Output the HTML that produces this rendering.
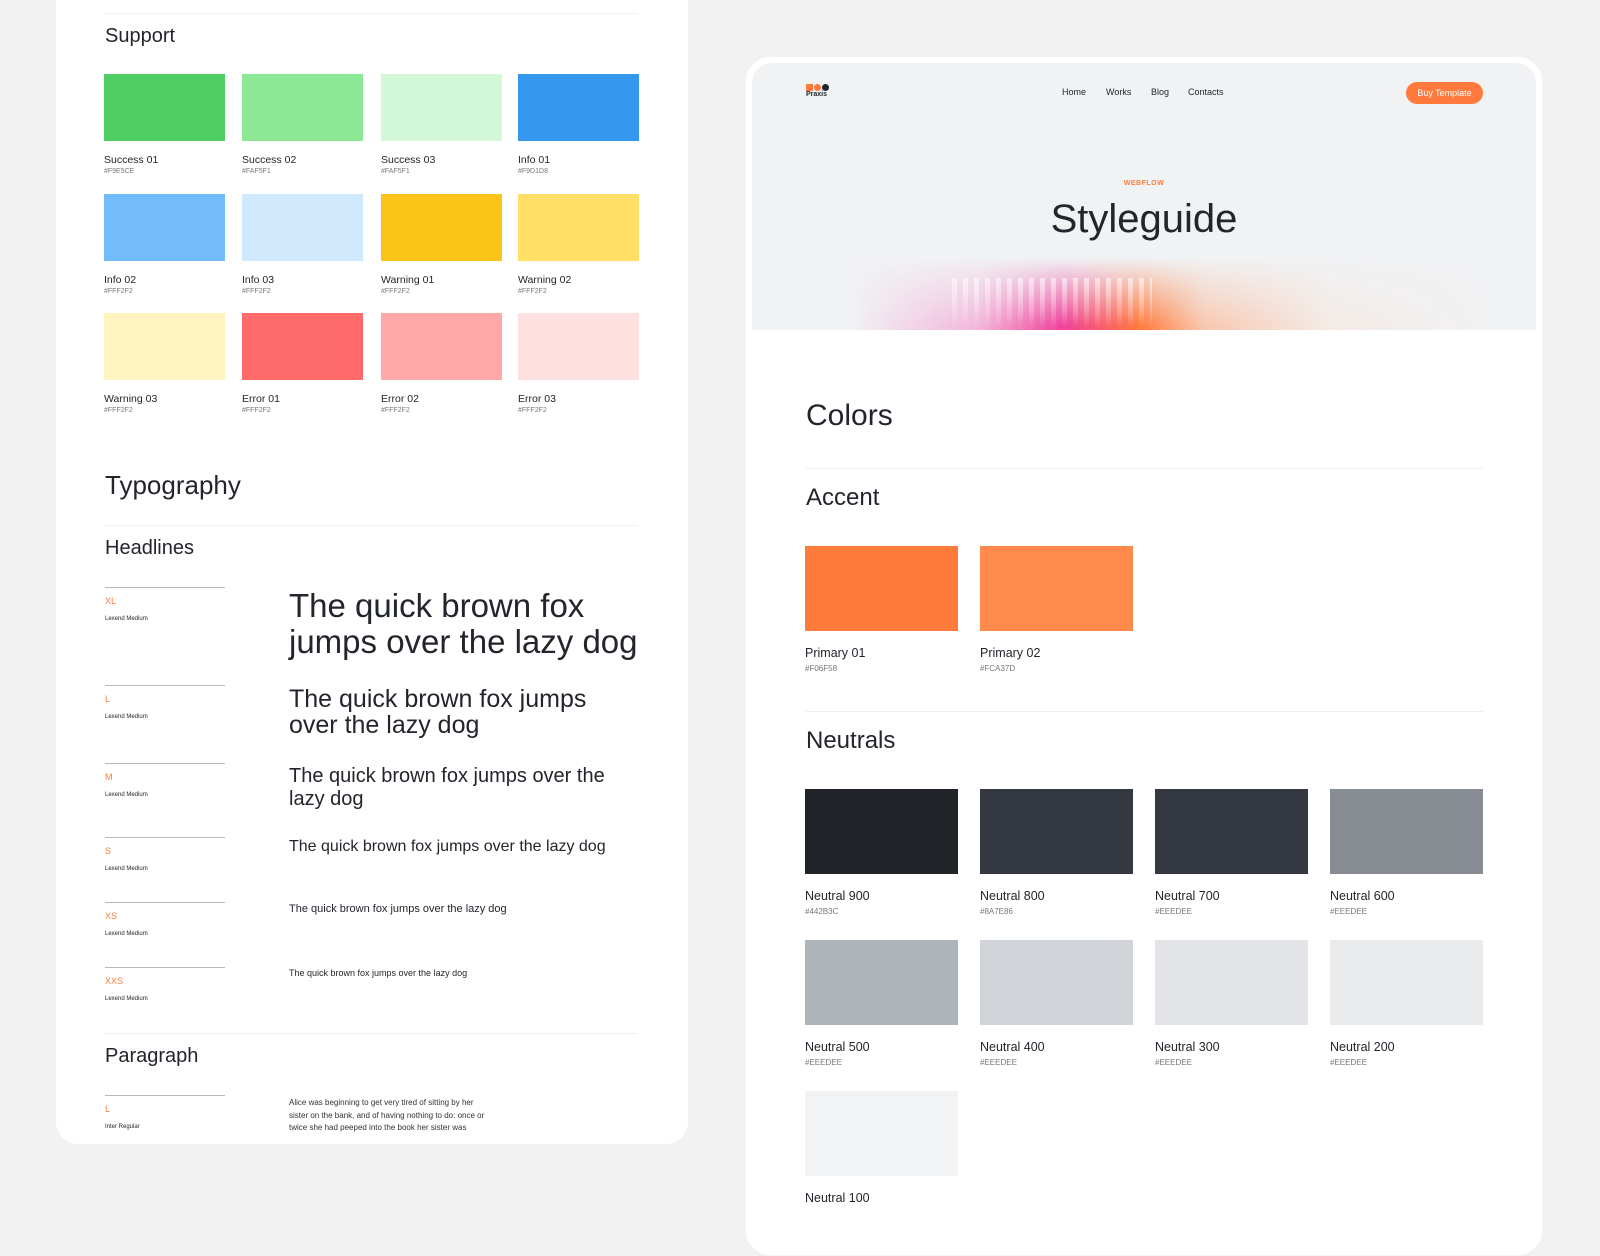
<!DOCTYPE html>
<html><head><meta charset="utf-8"><style>
*{margin:0;padding:0;box-sizing:border-box}
body{width:1600px;height:1200px;background:#f2f2f3;font-family:"Liberation Sans",sans-serif;color:#22252b;position:relative;overflow:hidden}
.a{position:absolute;white-space:nowrap}
.lp{position:absolute;left:56px;top:-30px;width:632px;height:1174px;background:#fff;border-radius:22px;overflow:hidden}
.rp{position:absolute;left:745px;top:56px;width:798px;height:1200px;background:#fff;border-radius:26px;border:1px solid #f4f4f5}
.sw{position:absolute}
.lab{position:absolute;font-size:10.5px;color:#22252b;white-space:nowrap}
.hex{position:absolute;font-size:7px;color:#777;white-space:nowrap}
.line{position:absolute;height:1px;background:#b8b8bb}
.hr{position:absolute;height:1px;background:#efeff1}
.or{color:#ff7a3c}
.nl{position:absolute;font-size:12.5px;white-space:nowrap}
.nh{position:absolute;font-size:8px;color:#777;white-space:nowrap}
</style></head><body>
<div class="lp"></div>
<div class="hr" style="left:105px;top:13px;width:533px"></div>
<div class="a" style="left:105px;top:25px;font-size:20px">Support</div>
<div class="sw" style="left:104px;top:74px;width:121px;height:67px;background:#4fce64"></div>
<div class="sw" style="left:242px;top:74px;width:121px;height:67px;background:#8de895"></div>
<div class="sw" style="left:381px;top:74px;width:121px;height:67px;background:#d3f8d7"></div>
<div class="sw" style="left:518px;top:74px;width:121px;height:67px;background:#3498ee"></div>
<div class="lab" style="left:104px;top:154px">Success 01</div><div class="hex" style="left:104px;top:168px">#F9E5CE</div>
<div class="lab" style="left:242px;top:154px">Success 02</div><div class="hex" style="left:242px;top:168px">#FAF5F1</div>
<div class="lab" style="left:381px;top:154px">Success 03</div><div class="hex" style="left:381px;top:168px">#FAF5F1</div>
<div class="lab" style="left:518px;top:154px">Info 01</div><div class="hex" style="left:518px;top:168px">#F9D1D8</div>
<div class="sw" style="left:104px;top:194px;width:121px;height:67px;background:#72bcfb"></div>
<div class="sw" style="left:242px;top:194px;width:121px;height:67px;background:#d0e9fd"></div>
<div class="sw" style="left:381px;top:194px;width:121px;height:67px;background:#fcc419"></div>
<div class="sw" style="left:518px;top:194px;width:121px;height:67px;background:#ffdf67"></div>
<div class="lab" style="left:104px;top:274px">Info 02</div><div class="hex" style="left:104px;top:288px">#FFF2F2</div>
<div class="lab" style="left:242px;top:274px">Info 03</div><div class="hex" style="left:242px;top:288px">#FFF2F2</div>
<div class="lab" style="left:381px;top:274px">Warning 01</div><div class="hex" style="left:381px;top:288px">#FFF2F2</div>
<div class="lab" style="left:518px;top:274px">Warning 02</div><div class="hex" style="left:518px;top:288px">#FFF2F2</div>
<div class="sw" style="left:104px;top:313px;width:121px;height:67px;background:#fff3bf"></div>
<div class="sw" style="left:242px;top:313px;width:121px;height:67px;background:#ff6b6b"></div>
<div class="sw" style="left:381px;top:313px;width:121px;height:67px;background:#ffa8a8"></div>
<div class="sw" style="left:518px;top:313px;width:121px;height:67px;background:#ffe0e1"></div>
<div class="lab" style="left:104px;top:393px">Warning 03</div><div class="hex" style="left:104px;top:407px">#FFF2F2</div>
<div class="lab" style="left:242px;top:393px">Error 01</div><div class="hex" style="left:242px;top:407px">#FFF2F2</div>
<div class="lab" style="left:381px;top:393px">Error 02</div><div class="hex" style="left:381px;top:407px">#FFF2F2</div>
<div class="lab" style="left:518px;top:393px">Error 03</div><div class="hex" style="left:518px;top:407px">#FFF2F2</div>

<div class="a" style="left:105px;top:470px;font-size:26px">Typography</div>
<div class="hr" style="left:105px;top:525px;width:533px"></div>
<div class="a" style="left:105px;top:537px;font-size:20px">Headlines</div>

<div class="line" style="left:105px;top:587px;width:120px"></div>
<div class="a or" style="left:105px;top:596px;font-size:9px">XL</div>
<div class="a" style="left:105px;top:616px;font-size:6px">Lexend Medium</div>
<div class="a" style="left:289px;top:588px;font-size:33px;line-height:36px">The quick brown fox<br>jumps over the lazy dog</div>

<div class="line" style="left:105px;top:685px;width:120px"></div>
<div class="a or" style="left:105px;top:694px;font-size:9px">L</div>
<div class="a" style="left:105px;top:714px;font-size:6px">Lexend Medium</div>
<div class="a" style="left:289px;top:686px;font-size:25px;line-height:26px">The quick brown fox jumps<br>over the lazy dog</div>

<div class="line" style="left:105px;top:763px;width:120px"></div>
<div class="a or" style="left:105px;top:772px;font-size:9px">M</div>
<div class="a" style="left:105px;top:792px;font-size:6px">Lexend Medium</div>
<div class="a" style="left:289px;top:765px;font-size:20px;line-height:23px">The quick brown fox jumps over the<br>lazy dog</div>

<div class="line" style="left:105px;top:837px;width:120px"></div>
<div class="a or" style="left:105px;top:846px;font-size:9px">S</div>
<div class="a" style="left:105px;top:866px;font-size:6px">Lexend Medium</div>
<div class="a" style="left:289px;top:838px;font-size:16px">The quick brown fox jumps over the lazy dog</div>

<div class="line" style="left:105px;top:902px;width:120px"></div>
<div class="a or" style="left:105px;top:911px;font-size:9px">XS</div>
<div class="a" style="left:105px;top:931px;font-size:6px">Lexend Medium</div>
<div class="a" style="left:289px;top:903px;font-size:11px">The quick brown fox jumps over the lazy dog</div>

<div class="line" style="left:105px;top:967px;width:120px"></div>
<div class="a or" style="left:105px;top:976px;font-size:9px">XXS</div>
<div class="a" style="left:105px;top:996px;font-size:6px">Lexend Medium</div>
<div class="a" style="left:289px;top:968px;font-size:9px">The quick brown fox jumps over the lazy dog</div>

<div class="hr" style="left:105px;top:1033px;width:533px"></div>
<div class="a" style="left:105px;top:1045px;font-size:20px">Paragraph</div>
<div class="line" style="left:105px;top:1095px;width:120px"></div>
<div class="a or" style="left:105px;top:1104px;font-size:9px">L</div>
<div class="a" style="left:105px;top:1124px;font-size:6px">Inter Regular</div>
<div class="a" style="left:289px;top:1097px;font-size:8px;line-height:12.5px;color:#333">Alice was beginning to get very tired of sitting by her<br>sister on the bank, and of having nothing to do: once or<br>twice she had peeped into the book her sister was</div>
<div style="position:absolute;left:0;top:1144px;width:700px;height:60px;background:#f2f2f3"></div>

<div class="rp"></div>
<div style="position:absolute;left:752px;top:63px;width:784px;height:267px;background:#f1f2f4;border-radius:20px 20px 0 0;overflow:hidden">
 <div style="position:absolute;left:100px;top:195px;width:640px;height:75px;background:linear-gradient(90deg,rgba(255,200,220,0) 0%,rgba(245,120,190,.5) 20%,#f0409a 33%,#ff7a3c 45%,rgba(255,160,110,.5) 55%,rgba(250,220,200,.3) 75%,rgba(250,230,220,0) 100%);-webkit-mask:linear-gradient(to bottom,transparent,#000 90%);mask:linear-gradient(to bottom,transparent,#000 90%)"></div>
 <div style="position:absolute;left:200px;top:215px;width:200px;height:52px;background:repeating-linear-gradient(90deg,rgba(255,255,255,.55) 0 5px,rgba(255,255,255,0) 5px 11px);-webkit-mask:linear-gradient(to bottom,#000,transparent);mask:linear-gradient(to bottom,#000,transparent)"></div>
</div>
<div style="position:absolute;left:806px;top:84px;width:7px;height:7px;background:#ff7a3c"></div>
<div style="position:absolute;left:814px;top:84px;width:7px;height:7px;background:#ff7a3c;border-radius:50%"></div>
<div style="position:absolute;left:822px;top:84px;width:7px;height:7px;background:#22252b;border-radius:50%"></div>
<div class="a" style="left:806px;top:91px;font-size:7px;font-weight:bold">Praxis</div>
<div class="a" style="left:1062px;top:87px;font-size:9px">Home</div>
<div class="a" style="left:1106px;top:87px;font-size:9px">Works</div>
<div class="a" style="left:1151px;top:87px;font-size:9px">Blog</div>
<div class="a" style="left:1188px;top:87px;font-size:9px">Contacts</div>
<div class="a" style="left:1406px;top:82px;width:77px;height:22px;border-radius:11px;background:#ff7a3c;color:#fff;font-size:9px;line-height:22px;text-align:center">Buy Template</div>
<div class="a or" style="left:1094px;top:180px;width:100px;text-align:center;font-size:7px;font-weight:bold;letter-spacing:.5px">WEBFLOW</div>
<div class="a" style="left:994px;top:197px;width:300px;text-align:center;font-size:40px">Styleguide</div>

<div class="a" style="left:806px;top:399px;font-size:30px">Colors</div>
<div class="hr" style="left:806px;top:468px;width:677px"></div>
<div class="a" style="left:806px;top:484px;font-size:24px">Accent</div>
<div class="sw" style="left:805px;top:546px;width:153px;height:85px;background:#fe7b3b"></div>
<div class="sw" style="left:980px;top:546px;width:153px;height:85px;background:#ff8a4b"></div>
<div class="nl" style="left:805px;top:646px">Primary 01</div><div class="nh" style="left:805px;top:664px">#F06F58</div>
<div class="nl" style="left:980px;top:646px">Primary 02</div><div class="nh" style="left:980px;top:664px">#FCA37D</div>
<div class="hr" style="left:806px;top:711px;width:677px"></div>
<div class="a" style="left:806px;top:727px;font-size:24px">Neutrals</div>

<div class="sw" style="left:805px;top:789px;width:153px;height:85px;background:#202328"></div>
<div class="sw" style="left:980px;top:789px;width:153px;height:85px;background:#343840"></div>
<div class="sw" style="left:1155px;top:789px;width:153px;height:85px;background:#343840"></div>
<div class="sw" style="left:1330px;top:789px;width:153px;height:85px;background:#878d93"></div>
<div class="nl" style="left:805px;top:889px">Neutral 900</div><div class="nh" style="left:805px;top:907px">#442B3C</div>
<div class="nl" style="left:980px;top:889px">Neutral 800</div><div class="nh" style="left:980px;top:907px">#8A7E86</div>
<div class="nl" style="left:1155px;top:889px">Neutral 700</div><div class="nh" style="left:1155px;top:907px">#EEEDEE</div>
<div class="nl" style="left:1330px;top:889px">Neutral 600</div><div class="nh" style="left:1330px;top:907px">#EEEDEE</div>

<div class="sw" style="left:805px;top:940px;width:153px;height:85px;background:#adb4ba"></div>
<div class="sw" style="left:980px;top:940px;width:153px;height:85px;background:#d1d5da"></div>
<div class="sw" style="left:1155px;top:940px;width:153px;height:85px;background:#e2e4e7"></div>
<div class="sw" style="left:1330px;top:940px;width:153px;height:85px;background:#e9ebed"></div>
<div class="nl" style="left:805px;top:1040px">Neutral 500</div><div class="nh" style="left:805px;top:1058px">#EEEDEE</div>
<div class="nl" style="left:980px;top:1040px">Neutral 400</div><div class="nh" style="left:980px;top:1058px">#EEEDEE</div>
<div class="nl" style="left:1155px;top:1040px">Neutral 300</div><div class="nh" style="left:1155px;top:1058px">#EEEDEE</div>
<div class="nl" style="left:1330px;top:1040px">Neutral 200</div><div class="nh" style="left:1330px;top:1058px">#EEEDEE</div>

<div class="sw" style="left:805px;top:1091px;width:153px;height:85px;background:#f2f3f4"></div>
<div class="nl" style="left:805px;top:1191px">Neutral 100</div>
</body></html>
